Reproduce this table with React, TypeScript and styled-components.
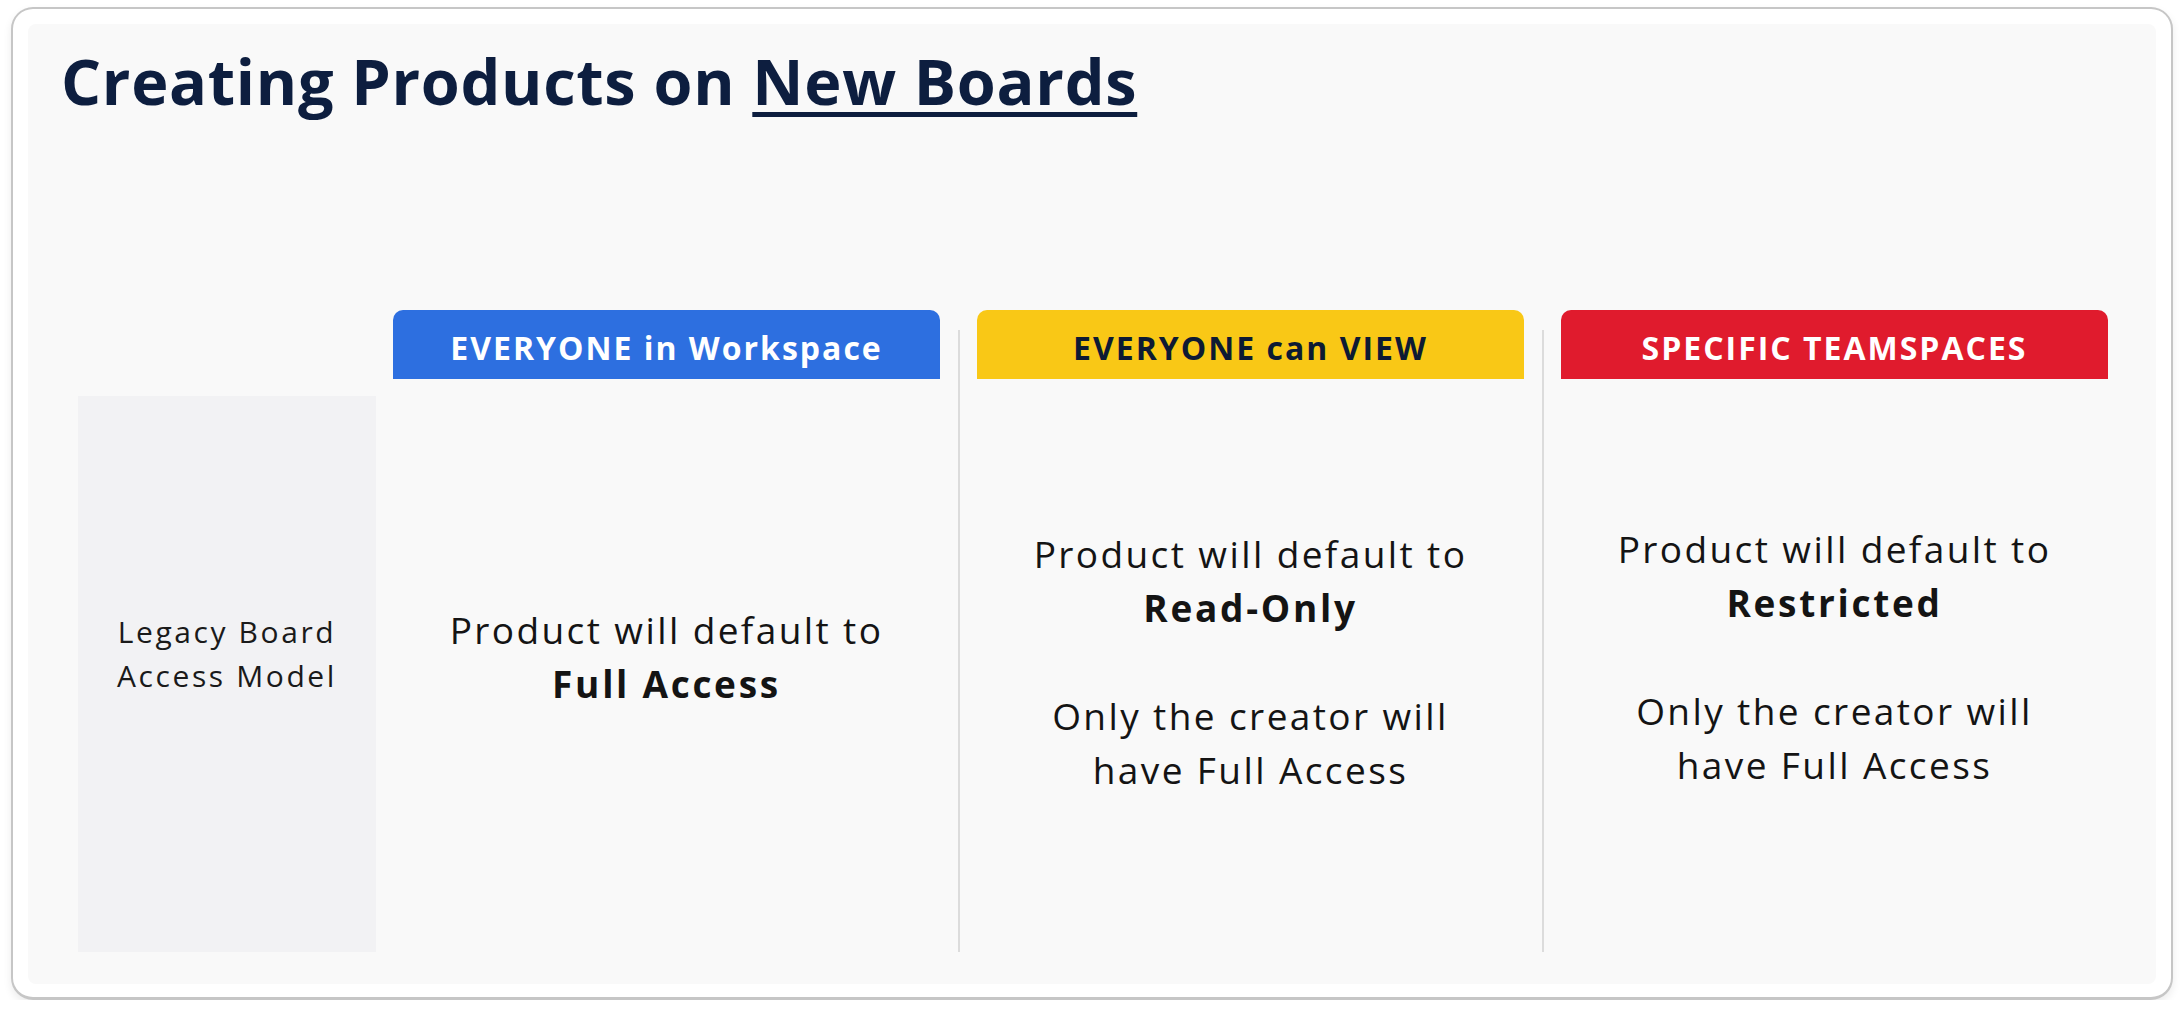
import React from "react";
import styled, { createGlobalStyle } from "styled-components";

const GlobalStyle = createGlobalStyle`
  html, body {
    margin: 0;
    padding: 0;
    background: #ffffff;
  }
  body {
    font-family: "Open Sans", "Liberation Sans", sans-serif;
  }
  * { box-sizing: border-box; }
`;

const Card = styled.div`
  margin: 7px 0 0 11px;
  width: 2162px;
  height: 993px;
  border: 2px solid #c6c6c6;
  border-bottom-width: 3px;
  border-radius: 22px;
  padding: 15px 15px 13px 15px;
  background: #ffffff;
  box-shadow: 0 4px 8px rgba(0, 0, 0, 0.08);
`;

const Panel = styled.div`
  height: 100%;
  background: #f9f9f9;
  border-radius: 8px;
  padding-top: 19px;
  display: flex;
  flex-direction: column;
`;

const Title = styled.h1`
  margin: 0 0 0 33px;
  font-family: "Open Sans", "Liberation Sans", sans-serif;
  font-weight: 700;
  font-size: 63px;
  line-height: 76px;
  color: #0d1e3f;
  letter-spacing: 0.7px;
`;

const Underlined = styled.span`
  text-decoration: underline;
  text-decoration-thickness: 5px;
  text-underline-offset: 7px;
`;

const Table = styled.div`
  display: flex;
  align-items: stretch;
  margin-top: 191px;
  padding-left: 50px;
`;

const LabelCell = styled.div`
  width: 298px;
  height: 556px;
  margin-top: 86px;
  margin-right: 17px;
  background: #f2f2f4;
  display: flex;
  align-items: center;
  justify-content: center;
  padding-bottom: 40px;
  text-align: center;
  font-size: 30px;
  line-height: 44px;
  letter-spacing: 2.6px;
  color: #1a1a1a;
`;

const Column = styled.div`
  width: 547px;
  display: flex;
  flex-direction: column;
`;

const Tab = styled.div<{ $bg: string; $fg: string }>`
  height: 69px;
  border-radius: 10px 10px 0 0;
  background: ${(p) => p.$bg};
  color: ${(p) => p.$fg};
  display: flex;
  align-items: center;
  justify-content: center;
  padding-top: 6px;
  font-weight: 700;
  font-size: 32px;
  line-height: 40px;
  letter-spacing: 2px;
`;

const Body = styled.div<{ $shift?: number }>`
  margin-top: 17px;
  height: 556px;
  display: flex;
  flex-direction: column;
  align-items: center;
  justify-content: center;
  padding-bottom: ${(p) => 35 - (p.$shift ?? 0) * 2}px;
  text-align: center;
  font-size: 37px;
  line-height: 54px;
  letter-spacing: 2.4px;
  color: #141414;
`;

const Para = styled.p`
  margin: 0;
  & + & {
    margin-top: 54px;
  }
`;

const Strong = styled.strong`
  font-weight: 700;
  letter-spacing: 2.7px;
`;

const Divider = styled.div`
  width: 37px;
  display: flex;
  justify-content: center;
  padding-top: 20px;
  &::after {
    content: "";
    display: block;
    width: 2px;
    height: 100%;
    background: #dcdcdc;
  }
`;

export default function App() {
  return (
    <>
      <GlobalStyle />
      <Card>
        <Panel>
          <Title>
            Creating Products on <Underlined>New Boards</Underlined>
          </Title>
          <Table>
            <LabelCell>
              Legacy Board
              <br />
              Access Model
            </LabelCell>
            <Column>
              <Tab $bg="#2d6fe0" $fg="#ffffff">EVERYONE in Workspace</Tab>
              <Body>
                <Para>
                  Product will default to
                  <br />
                  <Strong>Full Access</Strong>
                </Para>
              </Body>
            </Column>
            <Divider />
            <Column>
              <Tab $bg="#f9c816" $fg="#0d1a33">EVERYONE can VIEW</Tab>
              <Body $shift={5}>
                <Para>
                  Product will default to
                  <br />
                  <Strong>Read-Only</Strong>
                </Para>
                <Para>
                  Only the creator will
                  <br />
                  have Full Access
                </Para>
              </Body>
            </Column>
            <Divider />
            <Column>
              <Tab $bg="#e01b2d" $fg="#ffffff">SPECIFIC TEAMSPACES</Tab>
              <Body>
                <Para>
                  Product will default to
                  <br />
                  <Strong>Restricted</Strong>
                </Para>
                <Para>
                  Only the creator will
                  <br />
                  have Full Access
                </Para>
              </Body>
            </Column>
          </Table>
        </Panel>
      </Card>
    </>
  );
}
